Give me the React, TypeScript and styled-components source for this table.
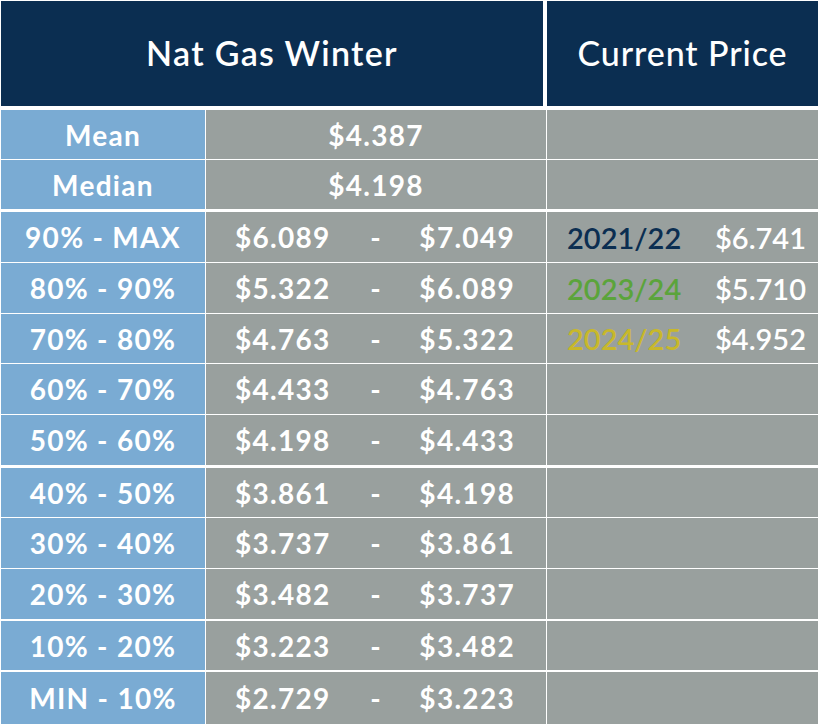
import styled, { createGlobalStyle } from "styled-components";

const NAVY = "#0b2e51";
const BLUE = "#7aabd3";
const GRAY = "#99a09e";

const GlobalStyle = createGlobalStyle`
  html, body {
    margin: 0;
    padding: 0;
    background: #ffffff;
  }
`;

type RangeRow = { label: string; low: string; high: string; year?: string; price?: string; tone?: string; gap: number; h: number };

const summary = [
  { label: "Mean", value: "$4.387", gap: 0, h: 49 },
  { label: "Median", value: "$4.198", gap: 1, h: 49 },
];

const ranges: RangeRow[] = [
  { label: "90% - MAX", low: "$6.089", high: "$7.049", year: "2021/22", price: "$6.741", tone: NAVY, gap: 3, h: 50 },
  { label: "80% - 90%", low: "$5.322", high: "$6.089", year: "2023/24", price: "$5.710", tone: "#5ba43b", gap: 1, h: 50 },
  { label: "70% - 80%", low: "$4.763", high: "$5.322", year: "2024/25", price: "$4.952", tone: "#c8b82a", gap: 1, h: 49 },
  { label: "60% - 70%", low: "$4.433", high: "$4.763", gap: 1, h: 50 },
  { label: "50% - 60%", low: "$4.198", high: "$4.433", gap: 1, h: 50 },
  { label: "40% - 50%", low: "$3.861", high: "$4.198", gap: 3, h: 49 },
  { label: "30% - 40%", low: "$3.737", high: "$3.861", gap: 1, h: 50 },
  { label: "20% - 30%", low: "$3.482", high: "$3.737", gap: 1, h: 50 },
  { label: "10% - 20%", low: "$3.223", high: "$3.482", gap: 2, h: 49 },
  { label: "MIN - 10%", low: "$2.729", high: "$3.223", gap: 2, h: 52 },
];

function App(): JSX.Element {
  return (
    <Page>
      <GlobalStyle />
      <Header>
        <HeadCell>Nat Gas Winter</HeadCell>
        <HeadCell $alt>Current Price</HeadCell>
      </Header>
      <Body>
        {summary.map((row) => (
          <Row key={row.label} $gap={row.gap} $h={row.h}>
            <Label>{row.label}</Label>
            <Range $single>{row.value}</Range>
            <Current />
          </Row>
        ))}
        {ranges.map((row) => (
          <Row key={row.label} $gap={row.gap} $h={row.h}>
            <Label>{row.label}</Label>
            <Range>
              <span>{row.low}</span>
              <Dash>-</Dash>
              <span>{row.high}</span>
            </Range>
            <Current>
              {row.year && <Year $tone={row.tone}>{row.year}</Year>}
              {row.price && <span>{row.price}</span>}
            </Current>
          </Row>
        ))}
      </Body>
    </Page>
  );
}

const Page = styled.div`
  width: 817px;
  padding: 1px 2px 0 1px;
  background: #ffffff;
`;
const Header = styled.div`
  display: grid;
  grid-template-columns: 542px 271px;
  column-gap: 4px;
  height: 105px;
`;
const HeadCell = styled.div<{ $alt?: boolean }>`
  background: ${NAVY};
  color: #ffffff;
  display: flex;
  align-items: center;
  justify-content: center;
  font-family: Lato, "Liberation Sans", sans-serif;
  font-weight: ${(p) => (p.$alt ? 500 : 600)};
  font-size: 34px;
  letter-spacing: ${(p) => (p.$alt ? "0.9px" : "1.3px")};
  padding-bottom: 2px;
`;
const Body = styled.div`
  display: flex;
  flex-direction: column;
  margin-top: 4px;
`;
const Row = styled.div<{ $gap: number; $h: number }>`
  display: grid;
  grid-template-columns: 204px 340px 271px;
  column-gap: 1px;
  height: ${(p) => p.$h}px;
  margin-top: ${(p) => p.$gap}px;
  font-family: Lato, "Liberation Sans", sans-serif;
  font-weight: 700;
  font-size: 28px;
  letter-spacing: 1.3px;
  color: #ffffff;
`;
const Label = styled.div`
  background: ${BLUE};
  display: flex;
  align-items: center;
  justify-content: center;
`;
const Range = styled.div<{ $single?: boolean }>`
  background: ${GRAY};
  display: flex;
  align-items: center;
  justify-content: ${(p) => (p.$single ? "center" : "space-between")};
  padding: ${(p) => (p.$single ? "0" : "0 31px 0 29px")};
`;
const Dash = styled.span`
  margin-left: 2px;
`;
const Current = styled.div`
  background: ${GRAY};
  display: flex;
  align-items: center;
  justify-content: space-between;
  padding: 0 12px 0 20px;
  font-weight: 600;
  font-size: 29px;
  letter-spacing: 0;
`;
const Year = styled.span<{ $tone?: string }>`
  color: ${(p) => p.$tone};
`;

export default App;
